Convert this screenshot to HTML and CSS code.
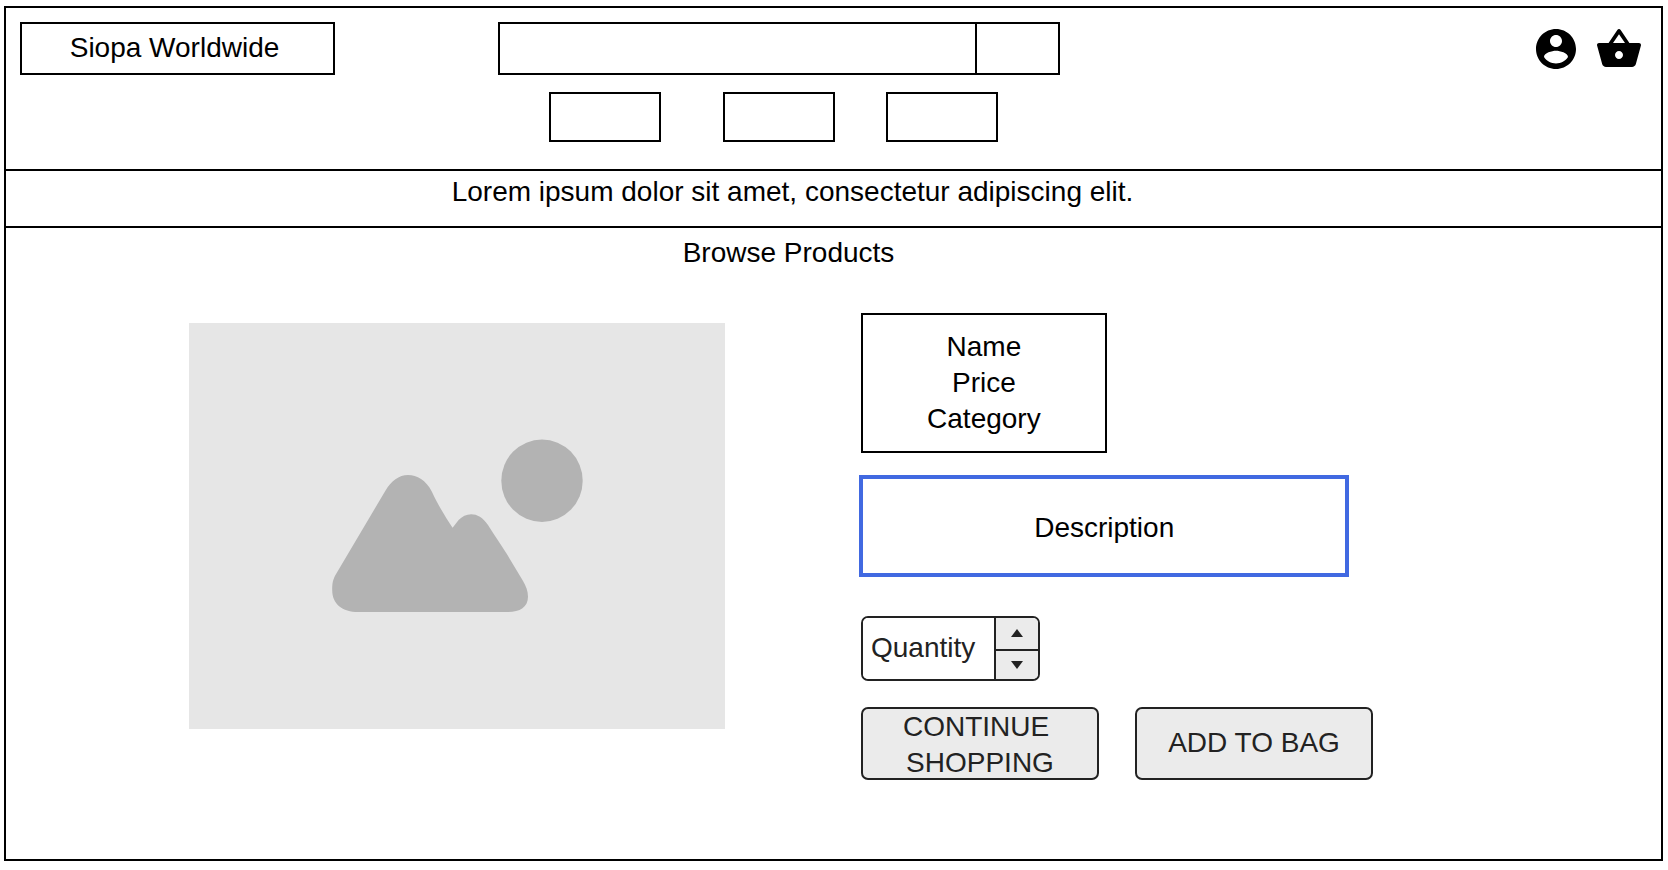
FILE: index.html
```html
<!DOCTYPE html>
<html lang="en">
<head>
  <meta charset="utf-8">
  <meta name="viewport" content="width=device-width, initial-scale=1">
  <title>Siopa Worldwide</title>
  <link rel="stylesheet" href="styles.css">
</head>
<body>
  <div class="page">
    <header class="header">
      <a class="logo" href="#">Siopa Worldwide</a>
      <form class="search">
        <input class="search-input" type="search" aria-label="Search products">
        <button class="search-button" type="button" aria-label="Search"></button>
      </form>
      <div class="actions">
        <a class="action" href="#" aria-label="Account">
          <svg class="icon" viewBox="0 0 24 24"><path d="M12 2C6.48 2 2 6.48 2 12s4.48 10 10 10 10-4.48 10-10S17.52 2 12 2zm0 3c1.66 0 3 1.34 3 3s-1.34 3-3 3-3-1.34-3-3 1.34-3 3-3zm0 14.2c-2.5 0-4.71-1.28-6-3.22.03-1.99 4-3.08 6-3.08 1.99 0 5.97 1.09 6 3.08-1.29 1.94-3.5 3.22-6 3.22z"/></svg>
        </a>
        <a class="action" href="#" aria-label="Shopping bag">
          <svg class="icon" viewBox="0 0 24 24"><path d="M17.21 9l-4.38-6.56c-.19-.28-.51-.42-.83-.42-.32 0-.64.14-.83.43L6.79 9H2c-.55 0-1 .45-1 1 0 .09.01.18.04.27l2.54 9.27c.23.84 1 1.46 1.92 1.46h13c.92 0 1.69-.62 1.93-1.46l2.54-9.27L23 10c0-.55-.45-1-1-1h-4.79zM9 9l3-4.4L15 9H9zm3 8c-1.1 0-2-.9-2-2s.9-2 2-2 2 .9 2 2-.9 2-2 2z"/></svg>
        </a>
      </div>
      <nav class="nav" aria-label="Categories">
        <button class="nav-item nav-first" type="button" aria-label="Category 1"></button>
        <button class="nav-item nav-second" type="button" aria-label="Category 2"></button>
        <button class="nav-item nav-third" type="button" aria-label="Category 3"></button>
      </nav>
    </header>

    <p class="banner">Lorem ipsum dolor sit amet, consectetur adipiscing elit.</p>

    <main class="main">
      <h1 class="title">Browse Products</h1>
      <div class="product">
        <svg class="photo" viewBox="0 0 536 406" role="img" aria-label="Product photo">
          <rect width="536" height="406" fill="#e6e6e6"/>
          <g fill="#b3b3b3">
            <ellipse cx="353" cy="157.700" rx="40.700" ry="41.200"/>
            <path d="M196.400 167.700C202 158 210 152 219 152S237 157 242.900 168.700C249 182 257 195 263.600 204.700L269.600 197C277 189 290 188 299 202C306 213 312 222 318 231.300L333.900 257.700C337 263 339 268 339 273.700C339 284 331 289 319 289H169.600C153 289 143.200 281 143.200 267C143.200 260 144 256 147.500 250.300Z"/>
          </g>
        </svg>
        <div class="details">
          <div class="summary">
            <p class="line">Name</p>
            <p class="line">Price</p>
            <p class="line">Category</p>
          </div>
          <p class="description">Description</p>
          <div class="quantity">
            <input class="quantity-input" type="text" value="Quantity" aria-label="Quantity">
            <div class="stepper">
              <button class="step" type="button" aria-label="Increase"><svg class="arrow" viewBox="0 0 12 8"><path d="M6 0l6 8H0z"/></svg></button>
              <button class="step" type="button" aria-label="Decrease"><svg class="arrow" viewBox="0 0 12 8"><path d="M0 0h12L6 8z"/></svg></button>
            </div>
          </div>
          <div class="buttons">
            <button class="button" type="button">CONTINUE&nbsp;<br>SHOPPING</button>
            <button class="button" type="button">ADD TO BAG</button>
          </div>
        </div>
      </div>
    </main>
  </div>
</body>
</html>
```

FILE: styles.css
```css
* {
  box-sizing: border-box;
}

body {
  display: flex;
  min-height: 100vh;
  margin: 0;
  padding: 6px 5px 9px 4px;
  background: #fff;
  color: #000;
  font: 28px/36px "Liberation Sans", Arial, sans-serif;
}

p,
h1 {
  margin: 0;
  font: inherit;
}

button,
input {
  min-width: 0;
  margin: 0;
  padding: 0;
  border: 2px solid #000;
  border-radius: 0;
  background: #fff;
  color: inherit;
  font: inherit;
}

.page {
  display: flex;
  flex: 1;
  flex-direction: column;
  min-width: 0;
  border: 2px solid #000;
}

.header {
  display: grid;
  grid-template-columns: 315fr 163fr 562fr 472fr 111px;
  row-gap: 17px;
  padding: 14px 18px 27px 14px;
  border-bottom: 2px solid #000;
}

.logo {
  display: flex;
  align-items: center;
  justify-content: center;
  height: 53px;
  padding: 0 6px 2px 0;
  border: 2px solid #000;
  color: inherit;
  text-decoration: none;
  white-space: nowrap;
}

.search {
  display: flex;
  grid-column: 3;
}

.search-input {
  flex: 1;
  padding: 0 12px;
  border-right: 0;
  appearance: none;
}

.search-button {
  width: 85px;
}

.actions {
  display: flex;
  grid-column: 5;
  align-items: center;
  justify-content: space-between;
}

.action {
  display: flex;
  color: inherit;
}

.icon {
  width: 48px;
  height: 48px;
  fill: currentColor;
}

.nav {
  display: grid;
  grid-column: 3;
  grid-template-columns: 51fr 112fr 62fr 112fr 51fr 112fr 62fr;
}

.nav-item {
  height: 50px;
}

.nav-first {
  grid-column: 2;
}

.nav-second {
  grid-column: 4;
}

.nav-third {
  grid-column: 6;
}

.banner {
  padding: 3px 82px 16px 0;
  border-bottom: 2px solid #000;
  text-align: center;
}

.main {
  padding-top: 7px;
}

.title {
  padding-right: 90px;
  text-align: center;
}

.product {
  display: grid;
  grid-template-columns: 183fr 536fr 136fr 512fr 288fr;
  align-items: start;
  padding: 42px 0;
}

.photo {
  grid-column: 2;
  width: 100%;
  margin-top: 10px;
}

.details {
  display: flex;
  grid-column: 4;
  flex-direction: column;
  align-items: flex-start;
}

.summary {
  width: 48%;
  padding: 14px 0;
  border: 2px solid #000;
  text-align: center;
}

.description {
  width: 95%;
  margin-top: 24px;
  padding: 31px 0 27px;
  border: 2px solid #4169e1;
  box-shadow: 0 0 0 2px #4169e1;
  text-align: center;
}

.quantity {
  display: flex;
  width: 35%;
  min-width: 168px;
  height: 65px;
  margin-top: 41px;
  overflow: hidden;
  border: 2px solid #222;
  border-radius: 7px;
  color: #222;
}

.quantity-input {
  flex: 1;
  padding: 0 0 2px 8px;
  border: 0;
}

.stepper {
  display: grid;
  grid-template-rows: 1fr 1fr;
  width: 44px;
  border-left: 2px solid #222;
}

.step {
  display: flex;
  align-items: center;
  justify-content: center;
  border: 0;
  background: #ebebeb;
}

.step + .step {
  border-top: 2px solid #222;
}

.arrow {
  width: 12px;
  height: 8px;
  fill: #222;
}

.buttons {
  display: grid;
  grid-template-columns: 1fr 1fr;
  gap: 36px;
  width: 100%;
  margin-top: 26px;
}

.button {
  height: 73px;
  padding-bottom: 2px;
  border-color: #222;
  border-radius: 7px;
  background: #ebebeb;
  color: #222;
  white-space: nowrap;
}
```
